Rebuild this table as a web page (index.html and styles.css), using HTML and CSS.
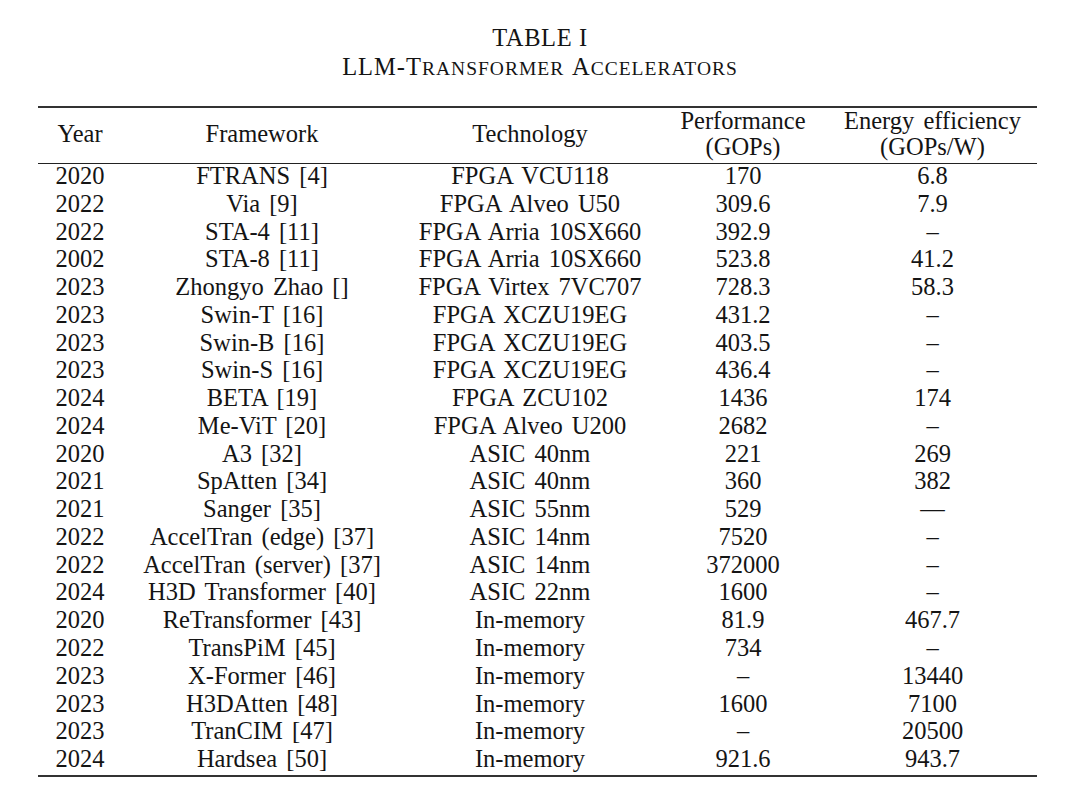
FILE: index.html
```html
<!DOCTYPE html>
<html>
<head>
<meta charset="utf-8">
<link rel="stylesheet" href="styles.css">
</head>
<body>
<div class="page">
  <div class="caption">
    <div class="cap-num">TABLE I</div>
    <div class="cap-title">LLM-T<span class="sc">ransformer</span> A<span class="sc">ccelerators</span></div>
  </div>
  <table class="tbl">
    <colgroup>
      <col class="c-year"><col class="c-fw"><col class="c-tech"><col class="c-perf"><col class="c-eff">
    </colgroup>
    <thead>
      <tr>
        <th>Year</th>
        <th>Framework</th>
        <th>Technology</th>
        <th>Performance<br>(GOPs)</th>
        <th>Energy efficiency<br>(GOPs/W)</th>
      </tr>
    </thead>
    <tbody>
      <tr><td>2020</td><td>FTRANS [4]</td><td>FPGA VCU118</td><td>170</td><td>6.8</td></tr>
      <tr><td>2022</td><td>Via [9]</td><td>FPGA Alveo U50</td><td>309.6</td><td>7.9</td></tr>
      <tr><td>2022</td><td>STA-4 [11]</td><td>FPGA Arria 10SX660</td><td>392.9</td><td>–</td></tr>
      <tr><td>2002</td><td>STA-8 [11]</td><td>FPGA Arria 10SX660</td><td>523.8</td><td>41.2</td></tr>
      <tr><td>2023</td><td>Zhongyo Zhao []</td><td>FPGA Virtex 7VC707</td><td>728.3</td><td>58.3</td></tr>
      <tr><td>2023</td><td>Swin-T [16]</td><td>FPGA XCZU19EG</td><td>431.2</td><td>–</td></tr>
      <tr><td>2023</td><td>Swin-B [16]</td><td>FPGA XCZU19EG</td><td>403.5</td><td>–</td></tr>
      <tr><td>2023</td><td>Swin-S [16]</td><td>FPGA XCZU19EG</td><td>436.4</td><td>–</td></tr>
      <tr><td>2024</td><td>BETA [19]</td><td>FPGA ZCU102</td><td>1436</td><td>174</td></tr>
      <tr><td>2024</td><td>Me-ViT [20]</td><td>FPGA Alveo U200</td><td>2682</td><td>–</td></tr>
      <tr><td>2020</td><td>A3 [32]</td><td>ASIC 40nm</td><td>221</td><td>269</td></tr>
      <tr><td>2021</td><td>SpAtten [34]</td><td>ASIC 40nm</td><td>360</td><td>382</td></tr>
      <tr><td>2021</td><td>Sanger [35]</td><td>ASIC 55nm</td><td>529</td><td>—</td></tr>
      <tr><td>2022</td><td>AccelTran (edge) [37]</td><td>ASIC 14nm</td><td>7520</td><td>–</td></tr>
      <tr><td>2022</td><td>AccelTran (server) [37]</td><td>ASIC 14nm</td><td>372000</td><td>–</td></tr>
      <tr><td>2024</td><td>H3D Transformer [40]</td><td>ASIC 22nm</td><td>1600</td><td>–</td></tr>
      <tr><td>2020</td><td>ReTransformer [43]</td><td>In-memory</td><td>81.9</td><td>467.7</td></tr>
      <tr><td>2022</td><td>TransPiM [45]</td><td>In-memory</td><td>734</td><td>–</td></tr>
      <tr><td>2023</td><td>X-Former [46]</td><td>In-memory</td><td>–</td><td>13440</td></tr>
      <tr><td>2023</td><td>H3DAtten [48]</td><td>In-memory</td><td>1600</td><td>7100</td></tr>
      <tr><td>2023</td><td>TranCIM [47]</td><td>In-memory</td><td>–</td><td>20500</td></tr>
      <tr><td>2024</td><td>Hardsea [50]</td><td>In-memory</td><td>921.6</td><td>943.7</td></tr>
    </tbody>
  </table>
</div>
</body>
</html>
```
FILE: styles.css
```css
html, body {
  margin: 0;
  padding: 0;
  background: #ffffff;
}
body {
  font-family: "Liberation Serif", "Times New Roman", serif;
  color: #141414;
  font-size: 24.5px;
}
.page {
  width: 1080px;
  height: 798px;
  display: flex;
  flex-direction: column;
  align-items: center;
}
.caption {
  padding-top: 23px;
  text-align: center;
  line-height: 29px;
  height: 106px;
  box-sizing: border-box;
}
.cap-num {
  letter-spacing: 0.6px;
}
.cap-title {
  letter-spacing: 1px;
  word-spacing: 2px;
}
.sc {
  text-transform: uppercase;
  font-size: 19.5px;
}
.tbl {
  margin-left: 38px;
  align-self: flex-start;
  width: 999px;
  border-collapse: collapse;
  table-layout: fixed;
  border-top: 2px solid #333;
  border-bottom: 2px solid #333;
  word-spacing: 3px;
}
.c-year { width: 84px; }
.c-fw { width: 280px; }
.c-tech { width: 256px; }
.c-perf { width: 170px; }
.c-eff { width: 209px; }
.tbl th {
  font-weight: normal;
  line-height: 26px;
  padding: 0 0 3px 0;
  height: 52px;
  text-align: center;
  vertical-align: middle;
  border-bottom: 1px solid #222;
  white-space: nowrap;
}
.tbl td {
  padding: 0 0 4px 0;
  height: 23.76px;
  line-height: 23.76px;
  text-align: center;
  white-space: nowrap;
}
```
